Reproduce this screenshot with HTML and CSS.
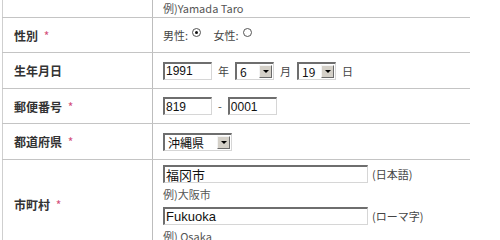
FILE: index.html
```html
<!DOCTYPE html>
<html lang="ja">
<head>
<meta charset="utf-8">
<link rel="stylesheet" href="styles.css">
</head>
<body>
<table class="form">
  <tr class="r0">
    <th></th>
    <td class="top"><span class="note">例)Yamada Taro</span></td>
  </tr>
  <tr class="r1">
    <th>性別 <span class="req">*</span></th>
    <td>
      <span class="txt">男性:</span><span class="radio on"></span>
      <span class="txt gap">女性:</span><span class="radio"></span>
    </td>
  </tr>
  <tr class="r2">
    <th>生年月日</th>
    <td>
      <div class="line">
        <span class="input w49">1991</span><span class="txt sep">年</span>
        <span class="select w39"><span class="val">6</span><span class="btn"></span></span><span class="txt sep">月</span>
        <span class="select w39"><span class="val">19</span><span class="btn"></span></span><span class="txt sep">日</span>
      </div>
    </td>
  </tr>
  <tr class="r3">
    <th>郵便番号 <span class="req">*</span></th>
    <td>
      <div class="line">
        <span class="input w49">819</span><span class="txt dash">-</span><span class="input w49">0001</span>
      </div>
    </td>
  </tr>
  <tr class="r4">
    <th>都道府県 <span class="req">*</span></th>
    <td>
      <div class="line">
        <span class="select w69"><span class="val">沖縄県</span><span class="btn"></span></span>
      </div>
    </td>
  </tr>
  <tr class="r5">
    <th>市町村 <span class="req">*</span></th>
    <td class="city">
      <div class="line"><span class="input w205 big">福冈市</span><span class="txt after">(日本語)</span></div>
      <div class="note ex">例)大阪市</div>
      <div class="line"><span class="input w205 big">Fukuoka</span><span class="txt after">(ローマ字)</span></div>
      <div class="note ex">例) Osaka</div>
    </td>
  </tr>
</table>
</body>
</html>
```

FILE: styles.css
```css
html, body {
  margin: 0;
  padding: 0;
  background: #ffffff;
  overflow: hidden;
}
body {
  font-family: "Noto Sans CJK JP", "DejaVu Sans", sans-serif;
  font-size: 11px;
  color: #444;
}
.form {
  margin-left: 2px;
  width: 468px;
  border-collapse: collapse;
  border-left: 1px solid #cfcfcf;
}
.form th, .form td {
  padding: 0;
  border-bottom: 1px solid #c4c4c4;
  vertical-align: middle;
}
.form th {
  width: 138px;
  padding-left: 11px;
  text-align: left;
  font-size: 12px;
  font-weight: bold;
  color: #333;
  border-right: 1px solid #bdbdbd;
}
.form td {
  padding-left: 10px;
}
.form .r0 th, .form .r0 td { height: 17px; }
.form .r0 td.top { vertical-align: top; }
.form .r1 th, .form .r1 td { height: 34px; }
.form .r2 th, .form .r2 td { height: 35px; }
.form .r3 th, .form .r3 td { height: 34px; }
.form .r4 th, .form .r4 td { height: 35px; }
.form .r5 th, .form .r5 td { border-bottom: none; }
.form .r5 th { padding-bottom: 1px; }
.form td.city {
  vertical-align: top;
  padding-top: 5px;
}
.req {
  color: #d4507a;
  font-weight: normal;
  font-size: 12px;
  margin-left: 3px;
}
.note {
  color: #555;
  font-size: 11px;
  line-height: 13px;
}
.txt {
  font-size: 11px;
  color: #444;
}
.gap { margin-left: 10px; }
.radio {
  display: inline-block;
  width: 9px;
  height: 9px;
  border: 1px solid #555;
  border-radius: 50%;
  margin-left: 4px;
  position: relative;
  top: -3px;
  box-sizing: border-box;
  background: #fff;
}
.radio.on::after {
  content: "";
  position: absolute;
  left: 2px;
  top: 2px;
  width: 3px;
  height: 3px;
  border-radius: 50%;
  background: #111;
}
.line {
  display: flex;
  align-items: center;
}
.input, .select {
  box-sizing: border-box;
  height: 18px;
  display: inline-flex;
  align-items: center;
  border-style: solid;
  border-width: 2px 1px 1px 2px;
  border-color: #6e6e6e #d6d6d6 #d6d6d6 #6e6e6e;
  background: #fff;
  font-family: "Liberation Sans", "Noto Sans CJK JP", sans-serif;
  font-size: 12px;
  color: #111;
  padding-left: 1px;
}
.input.big { font-size: 13px; }
.w49 { width: 49px; }
.w39 { width: 39px; }
.w69 { width: 69px; }
.w205 { width: 205px; }
.select {
  justify-content: space-between;
  padding-left: 3px;
  padding-right: 1px;
}
.select .val {
  font-family: "Noto Sans CJK JP", "Liberation Sans", sans-serif;
}
.select .btn {
  width: 13px;
  height: 13px;
  box-sizing: border-box;
  background: #d4d0c8;
  border: 1px solid;
  border-color: #f4f4f4 #6a6a6a #6a6a6a #f4f4f4;
  position: relative;
}
.select .btn::after {
  content: "";
  position: absolute;
  left: 3px;
  top: 4px;
  border-left: 3px solid transparent;
  border-right: 3px solid transparent;
  border-top: 3px solid #000;
}
.sep { margin: 0 6px 0 6px; }
.dash { margin: 0 6px 0 6px; }
.after { margin-left: 4px; }
.ex { margin: 5px 0 6px 0; }
```
